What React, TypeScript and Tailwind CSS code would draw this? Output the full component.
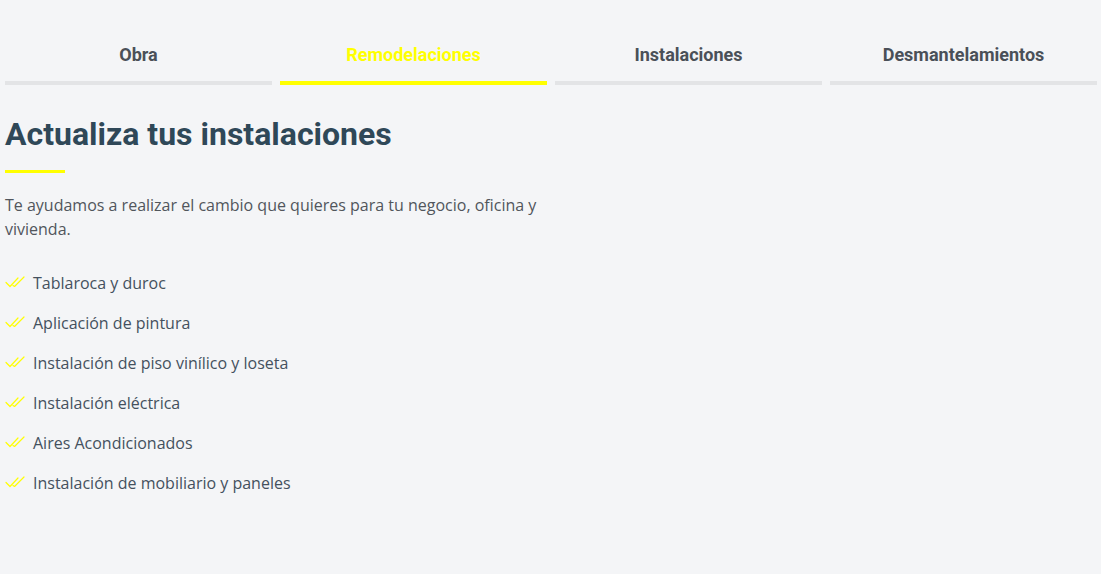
import React from 'react';

const tabs = ['Obra', 'Remodelaciones', 'Instalaciones', 'Desmantelamientos'];

const items = [
    'Tablaroca y duroc',
    'Aplicación de pintura',
    'Instalación de piso vinílico y loseta',
    'Instalación eléctrica',
    'Aires Acondicionados',
    'Instalación de mobiliario y paneles',
];

const DoubleCheck = () => (
    <svg width="20" height="12" viewBox="0 0 20 12" fill="none" stroke="#ffff00" strokeWidth="1.2" strokeLinecap="round" strokeLinejoin="round" className="mb-[3px]">
        <polyline points="1,6.5 5,10.5 13,2" />
        <polyline points="8,9.5 9.5,10.5 19,1" />
    </svg>
);

const App: React.FC = () => {
    const active = 1;

    return (
        <div className="min-h-screen bg-[#f4f5f7] pl-[5px] pr-[4px] pt-[43px]">
            <div className="grid grid-cols-4 gap-x-2">
                {tabs.map((t, i) => (
                    <div key={t} className="cursor-pointer">
                        <div
                            className={`text-center text-[18px] leading-6 font-bold ${i === active ? 'text-[#ffff00]' : 'text-[#4a5058]'}`}
                            style={{ fontFamily: 'Roboto, sans-serif' }}
                        >
                            {t}
                        </div>
                        <div className={`mt-[14px] h-1 ${i === active ? 'bg-[#ffff00]' : 'bg-[#e3e4e6]'}`} />
                    </div>
                ))}
            </div>

            <div className="w-[545px] pt-[30px]">
                <h2
                    className="text-[32px] leading-[38px] font-bold text-[#2f4858]"
                    style={{ fontFamily: 'Roboto, sans-serif' }}
                >
                    Actualiza tus instalaciones
                </h2>
                <div className="mt-[17px] h-[3px] w-[60px] bg-[#ffff00]" />

                <div style={{ fontFamily: '"Open Sans", sans-serif' }}>
                    <p className="mt-[20px] text-[16px] leading-6 text-[#51565c]">
                        Te ayudamos a realizar el cambio que quieres para tu negocio, oficina y vivienda.
                    </p>

                    <ul className="mt-[30px] flex flex-col gap-4">
                        {items.map((item) => (
                            <li key={item} className="flex items-center gap-2 text-[16px] leading-6 text-[#44515e]">
                                <DoubleCheck />
                                <span>{item}</span>
                            </li>
                        ))}
                    </ul>
                </div>
            </div>
        </div>
    );
};

export default App;
